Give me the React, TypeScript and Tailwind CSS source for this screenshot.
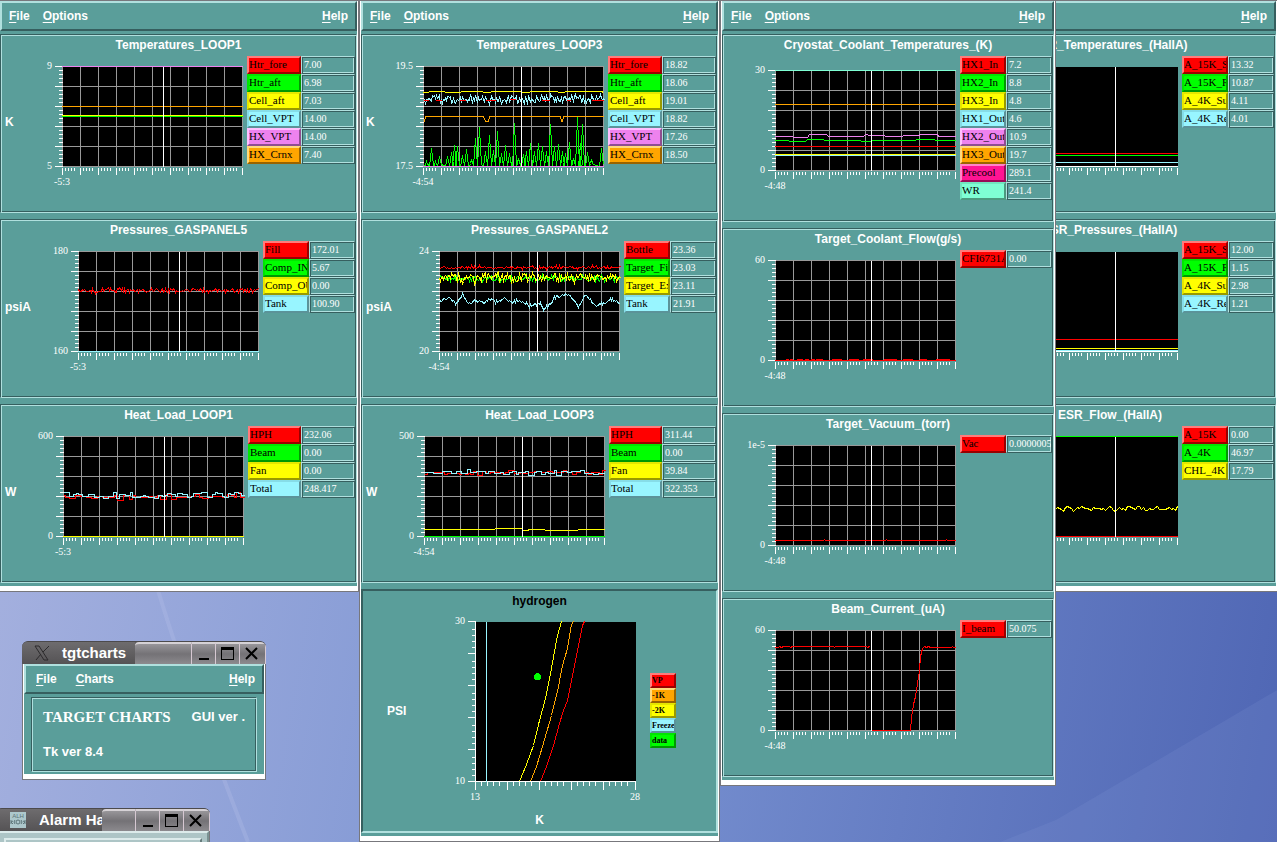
import { Fragment, type ReactNode } from 'react';
import clsx from 'clsx';

type Tone = 'red' | 'green' | 'yellow' | 'cyan' | 'violet' | 'orange' | 'pink' | 'aqua';

type Series = { tone: Tone; points: string };

type ChartData = {
  title: string;
  unit?: string;
  max: string;
  min: string;
  start: string;
  cursor: number;
  grid?: boolean;
  nameWidth: string;
  valueWidth: string;
  legend: [Tone, string, string][];
  series: Series[];
};

const strokes: Record<Tone, string> = {
  red: '#ff0000',
  green: '#00ff00',
  yellow: '#ffff00',
  cyan: '#98f5ff',
  violet: '#ee82ee',
  orange: '#ffa500',
  pink: '#ff1493',
  aqua: '#7fffd4',
};

const toneClasses: Record<Tone, string> = {
  red: 'bg-[#ff0000] border-t-[#ff7b7b] border-l-[#ff7b7b] border-b-[#990000] border-r-[#990000]',
  green: 'bg-[#00ff00] border-t-[#00e600] border-l-[#00e600] border-b-[#009900] border-r-[#009900]',
  yellow: 'bg-[#ffff00] border-t-[#e6e600] border-l-[#e6e600] border-b-[#999900] border-r-[#999900]',
  cyan: 'bg-[#98f5ff] border-t-[#86dde8] border-l-[#86dde8] border-b-[#5b9399] border-r-[#5b9399]',
  violet: 'bg-[#ee82ee] border-t-[#ffc0ff] border-l-[#ffc0ff] border-b-[#8f4e8f] border-r-[#8f4e8f]',
  orange: 'bg-[#ffa500] border-t-[#ffd97b] border-l-[#ffd97b] border-b-[#996300] border-r-[#996300]',
  pink: 'bg-[#ff1493] border-t-[#ff85c8] border-l-[#ff85c8] border-b-[#990c58] border-r-[#990c58]',
  aqua: 'bg-[#7fffd4] border-t-[#72e6bf] border-l-[#72e6bf] border-b-[#4c997f] border-r-[#4c997f]',
};

const groove =
  'border border-t-[#365f5f] border-l-[#365f5f] border-b-[#b0e0de] border-r-[#b0e0de] p-px shadow-[inset_1px_1px_0_#b0e0de,inset_-1px_-1px_0_#365f5f]';
const ridge =
  'border border-t-[#b0e0de] border-l-[#b0e0de] border-b-[#365f5f] border-r-[#365f5f] shadow-[inset_1px_1px_0_#365f5f,inset_-1px_-1px_0_#b0e0de]';
const raised =
  'border-2 border-t-[#b0e0de] border-l-[#b0e0de] border-b-[#365f5f] border-r-[#365f5f]';
const serif = "font-['Liberation_Serif',serif]";

function random(seed: number) {
  let s = seed * 7919 + 17;
  return () => {
    s = (s * 1103515245 + 12345) % 2147483648;
    return s / 2147483648;
  };
}

function flat(y: number, from = -1, to = 180) {
  return `${from},${y} ${to},${y}`;
}

// Signal that wobbles around a base value
function noise(seed: number, base: number, amp: number, step = 1) {
  const next = random(seed);
  const out: string[] = [];
  for (let x = 0; x <= 181; x += step) {
    const swing = (next() + next() - 1) * amp;
    out.push(`${x},${Math.round(base + swing)}`);
  }
  return out.join(' ');
}

// Same, but the value holds for a few samples before it moves
function steps(seed: number, base: number, amp: number) {
  const next = random(seed);
  const out: string[] = [];
  let x = 0;
  while (x < 180) {
    const y = Math.round(base + (next() + next() - 1) * amp);
    const end = Math.min(181, x + 2 + Math.floor(next() * 5));
    out.push(`${x},${y} ${end},${y}`);
    x = end;
  }
  return out.join(' ');
}

function wander(seed: number, knots: [number, number][], amp: number) {
  const next = random(seed);
  const out: string[] = [];
  for (let i = 0; i < knots.length - 1; i++) {
    const [x0, y0] = knots[i];
    const [x1, y1] = knots[i + 1];
    for (let x = x0; x < x1; x++) {
      const y = y0 + ((y1 - y0) * (x - x0)) / (x1 - x0);
      out.push(`${x},${Math.round(y + (next() - 0.5) * amp)}`);
    }
  }
  return out.join(' ');
}

function spikes(peaks: [number, number][]) {
  return peaks
    .map(([x, y]) => `${x - 2},100 ${x - 1},${Math.round(y + (100 - y) * 0.5)} ${x},${y} ${x + 1},${Math.round(y + (100 - y) * 0.5)} ${x + 2},98`)
    .join(' ');
}

const htrAft = spikes([
  [3, 95], [8, 82], [12, 95], [16, 90], [24, 90], [28, 86], [31, 79], [34, 80], [39, 89],
  [43, 83], [48, 93], [52, 72], [56, 61], [62, 85], [66, 69], [70, 84], [74, 65], [78, 87],
  [82, 79], [86, 87], [91, 57], [95, 92], [100, 88], [103, 85], [107, 77], [111, 85],
  [115, 77], [119, 80], [123, 85], [127, 58], [131, 80], [135, 78], [139, 85], [142, 87],
  [146, 76], [150, 92], [154, 51], [157, 77], [159, 58], [164, 86], [168, 93], [178, 82],
]);

const loop1: ChartData[] = [
  {
    title: 'Temperatures_LOOP1',
    unit: 'K',
    max: '9',
    min: '5',
    start: '-5:3',
    cursor: 101,
    nameWidth: 'w-[54px]',
    valueWidth: 'w-[54px]',
    legend: [
      ['red', 'Htr_fore', '7.00'],
      ['green', 'Htr_aft', '6.98'],
      ['yellow', 'Cell_aft', '7.03'],
      ['cyan', 'Cell_VPT', '14.00'],
      ['violet', 'HX_VPT', '14.00'],
      ['orange', 'HX_Crnx', '7.40'],
    ],
    series: [
      { tone: 'violet', points: flat(0) },
      { tone: 'orange', points: flat(40) },
      { tone: 'yellow', points: flat(49) },
      { tone: 'green', points: flat(50) },
    ],
  },
  {
    title: 'Pressures_GASPANEL5',
    unit: 'psiA',
    max: '180',
    min: '160',
    start: '-5:3',
    cursor: 101,
    nameWidth: 'w-[46px]',
    valueWidth: 'w-[46px]',
    legend: [
      ['red', 'Fill', '172.01'],
      ['green', 'Comp_IN', '5.67'],
      ['yellow', 'Comp_OUT', '0.00'],
      ['cyan', 'Tank', '100.90'],
    ],
    series: [
      { tone: 'red', points: noise(3, 39, 3) },
      { tone: 'cyan', points: flat(100) },
    ],
  },
  {
    title: 'Heat_Load_LOOP1',
    unit: 'W',
    max: '600',
    min: '0',
    start: '-5:3',
    cursor: 101,
    nameWidth: 'w-[53px]',
    valueWidth: 'w-[54px]',
    legend: [
      ['red', 'HPH', '232.06'],
      ['green', 'Beam', '0.00'],
      ['yellow', 'Fan', '0.00'],
      ['cyan', 'Total', '248.417'],
    ],
    series: [
      { tone: 'red', points: steps(8, 60, 4) },
      { tone: 'cyan', points: steps(5, 59, 4) },
      { tone: 'yellow', points: flat(100) },
    ],
  },
];

const loop3: ChartData[] = [
  {
    title: 'Temperatures_LOOP3',
    unit: 'K',
    max: '19.5',
    min: '17.5',
    start: '-4:54',
    cursor: 98,
    nameWidth: 'w-[54px]',
    valueWidth: 'w-[54px]',
    legend: [
      ['red', 'Htr_fore', '18.82'],
      ['green', 'Htr_aft', '18.06'],
      ['yellow', 'Cell_aft', '19.01'],
      ['cyan', 'Cell_VPT', '18.82'],
      ['violet', 'HX_VPT', '17.26'],
      ['orange', 'HX_Crnx', '18.50'],
    ],
    series: [
      { tone: 'green', points: htrAft },
      { tone: 'cyan', points: noise(12, 33, 6) },
      { tone: 'red', points: '0,34 5,34' },
      { tone: 'red', points: '12,34 18,34' },
      { tone: 'red', points: '36,34 42,34' },
      { tone: 'red', points: '62,34 72,34' },
      { tone: 'red', points: '86,33 92,33' },
      { tone: 'red', points: '118,34 126,34' },
      { tone: 'red', points: '143,34 147,34' },
      { tone: 'red', points: '168,34 180,34' },
      {
        tone: 'yellow',
        points: '-1,26 5,26 6,25 21,25 22,26 37,26 38,25 59,25 60,26 67,26 68,25 98,25 99,26 106,26 107,25 134,25 135,26 141,26 142,25 178,25 180,26',
      },
      {
        tone: 'orange',
        points: '0,55 1,55 2,50 60,50 62,55 65,55 66,50 137,50 138,55 139,55 140,50 180,50',
      },
      { tone: 'violet', points: flat(100) },
    ],
  },
  {
    title: 'Pressures_GASPANEL2',
    unit: 'psiA',
    max: '24',
    min: '20',
    start: '-4:54',
    cursor: 98,
    nameWidth: 'w-[46px]',
    valueWidth: 'w-[46px]',
    legend: [
      ['red', 'Bottle', '23.36'],
      ['green', 'Target_Fill', '23.03'],
      ['yellow', 'Target_Exh', '23.11'],
      ['cyan', 'Tank', '21.91'],
    ],
    series: [
      { tone: 'red', points: noise(21, 16, 2) },
      { tone: 'green', points: noise(22, 27, 4) },
      { tone: 'yellow', points: noise(23, 26, 7) },
      {
        tone: 'cyan',
        points: wander(
          24,
          [
            [0, 50], [8, 46], [17, 52], [23, 43], [29, 52], [36, 49], [44, 51], [51, 48], [58, 51],
            [66, 46], [72, 51], [79, 49], [86, 52], [90, 55], [101, 51], [104, 58], [112, 52],
            [114, 47], [127, 42], [134, 48], [139, 55], [146, 43], [156, 54], [166, 51],
            [171, 47], [181, 52],
          ],
          3,
        ),
      },
    ],
  },
  {
    title: 'Heat_Load_LOOP3',
    unit: 'W',
    max: '500',
    min: '0',
    start: '-4:54',
    cursor: 98,
    nameWidth: 'w-[53px]',
    valueWidth: 'w-[54px]',
    legend: [
      ['red', 'HPH', '311.44'],
      ['green', 'Beam', '0.00'],
      ['yellow', 'Fan', '39.84'],
      ['cyan', 'Total', '322.353'],
    ],
    series: [
      { tone: 'red', points: steps(31, 36, 3) },
      { tone: 'cyan', points: steps(36, 36, 3) },
      {
        tone: 'yellow',
        points: '-1,93 70,93 71,92 98,92 98,94 104,94 104,93 120,93 121,94 153,94 154,93 180,93',
      },
      { tone: 'green', points: flat(100) },
    ],
  },
];

const cryostat: ChartData[] = [
  {
    title: 'Cryostat_Coolant_Temperatures_(K)',
    max: '30',
    min: '0',
    start: '-4:48',
    cursor: 96,
    nameWidth: 'w-[46px]',
    valueWidth: 'w-[46px]',
    legend: [
      ['red', 'HX1_In', '7.2'],
      ['green', 'HX2_In', '8.8'],
      ['yellow', 'HX3_In', '4.8'],
      ['cyan', 'HX1_Out', '4.6'],
      ['violet', 'HX2_Out', '10.9'],
      ['orange', 'HX3_Out', '19.7'],
      ['pink', 'Precool', '289.1'],
      ['aqua', 'WR', '241.4'],
    ],
    series: [
      { tone: 'aqua', points: flat(0) },
      { tone: 'orange', points: flat(34) },
      {
        tone: 'violet',
        points: '-1,66 17,66 18,67 32,67 34,64 51,64 53,66 88,66 90,64 95,65 109,65 110,66 127,66 128,65 143,65 145,64 162,64 163,66 180,66',
      },
      {
        tone: 'green',
        points: '-1,70 13,70 14,71 30,71 32,69 48,69 49,70 85,70 86,71 96,71 97,70 140,70 141,69 159,69 160,70 180,70',
      },
      { tone: 'red', points: flat(76) },
      { tone: 'cyan', points: flat(85) },
      { tone: 'yellow', points: flat(84) },
    ],
  },
  {
    title: 'Target_Coolant_Flow(g/s)',
    max: '60',
    min: '0',
    start: '-4:48',
    cursor: 96,
    nameWidth: 'w-[46px]',
    valueWidth: 'w-[46px]',
    legend: [['red', 'CFI6731A', '0.00']],
    series: [
      {
        tone: 'red',
        points: '10,99 12,99 14,100 16,99 18,100 26,99 28,100 32,99 34,100 38,99 40,100 42,99 47,99 48,100 66,99 67,100 81,99 85,100 91,99 96,99 98,100 120,99 122,100 134,99 140,100 150,99 153,100 169,99 173,99 176,100',
      },
      { tone: 'red', points: flat(100) },
    ],
  },
  {
    title: 'Target_Vacuum_(torr)',
    max: '1e-5',
    min: '0',
    start: '-4:48',
    cursor: 96,
    nameWidth: 'w-[46px]',
    valueWidth: 'w-[46px]',
    legend: [['red', 'Vac', '0.0000005']],
    series: [{ tone: 'red', points: '-1,95 48,95 49,94 50,95 110,95 111,94 112,95 170,95 171,94 172,95 180,95' }],
  },
  {
    title: 'Beam_Current_(uA)',
    max: '60',
    min: '0',
    start: '-4:48',
    cursor: 96,
    nameWidth: 'w-[46px]',
    valueWidth: 'w-[46px]',
    legend: [['red', 'I_beam', '50.075']],
    series: [
      {
        tone: 'red',
        points: '-1,17 3,17 4,16 6,17 8,16 14,16 15,17 17,16 58,16 59,17 60,16 91,16 92,17 94,16 95,17',
      },
      {
        tone: 'red',
        points: '96,100 135,100 136,87 138,74 140,66 142,53 144,40 145,26 147,18 149,16 151,17 153,16 155,17 176,17 177,16 178,17 180,17',
      },
    ],
  },
];

const esr: ChartData[] = [
  {
    title: 'ESR_Temperatures_(HallA)',
    max: '100',
    min: '0',
    start: '-4:48',
    cursor: 118,
    grid: false,
    nameWidth: 'w-[46px]',
    valueWidth: 'w-[46px]',
    legend: [
      ['red', 'A_15K_Sup', '13.32'],
      ['green', 'A_15K_Ret', '10.87'],
      ['yellow', 'A_4K_Sup', '4.11'],
      ['cyan', 'A_4K_Ret', '4.01'],
    ],
    series: [
      { tone: 'red', points: flat(87) },
      { tone: 'green', points: flat(89) },
      { tone: 'cyan', points: flat(96) },
    ],
  },
  {
    title: 'ESR_Pressures_(HallA)',
    max: '100',
    min: '0',
    start: '-4:48',
    cursor: 118,
    grid: false,
    nameWidth: 'w-[46px]',
    valueWidth: 'w-[46px]',
    legend: [
      ['red', 'A_15K_Sup', '12.00'],
      ['green', 'A_15K_Ret', '1.15'],
      ['yellow', 'A_4K_Sup', '2.98'],
      ['cyan', 'A_4K_Ret', '1.21'],
    ],
    series: [
      { tone: 'red', points: flat(88) },
      { tone: 'yellow', points: flat(97) },
      { tone: 'cyan', points: flat(99) },
    ],
  },
  {
    title: 'ESR_Flow_(HallA)',
    max: '100',
    min: '0',
    start: '-4:48',
    cursor: 118,
    grid: false,
    nameWidth: 'w-[46px]',
    valueWidth: 'w-[46px]',
    legend: [
      ['red', 'A_15K', '0.00'],
      ['green', 'A_4K', '46.97'],
      ['yellow', 'CHL_4K', '17.79'],
    ],
    series: [
      { tone: 'green', points: flat(0) },
      { tone: 'yellow', points: noise(52, 72, 3, 2) },
      { tone: 'red', points: flat(100) },
    ],
  },
];

function range(count: number) {
  return Array.from({ length: count }, (_, i) => i);
}

function MenuBar({ items, className }: { items: string[]; className?: string }) {
  return (
    <nav className={clsx('flex h-[30px] items-center pr-[7px] text-[12px] font-bold', raised, className)}>
      {items.map((item, i) => (
        <button
          key={item}
          type="button"
          className={clsx('leading-4', i === items.length - 1 && 'ml-auto')}
        >
          <u className="underline-offset-2">{item[0]}</u>
          {item.slice(1)}
        </button>
      ))}
    </nav>
  );
}

function StripChart({ chart }: { chart: ChartData }) {
  const grid = chart.grid !== false;
  return (
    <svg
      width="229"
      height="136"
      className={clsx('shrink-0', chart.legend.length > 6 && 'mt-1')}
      role="img"
      aria-label={chart.title}
    >
      <g transform="translate(44.5 10.5)" fill="none" strokeWidth="1" shapeRendering="crispEdges">
        <rect x="0" y="0" width="180" height="100" fill="#000" />
        {grid && (
          <g stroke="#999999">
            {range(11).map((i) => (
              <line key={i} x1={i * 18} y1="0" x2={i * 18} y2="100" />
            ))}
            {range(6).map((i) => (
              <line key={i} x1="0" y1={i * 20} x2="180" y2={i * 20} />
            ))}
          </g>
        )}
        <g stroke="#fff">
          {range(26).map((i) => (
            <line key={i} x1={i % 5 === 0 ? -8 : -4} y1={i * 4} x2="0" y2={i * 4} />
          ))}
          {range(11).map((i) => (
            <Fragment key={i}>
              <line x1={i * 18} y1="101" x2={i * 18} y2="108" />
              {i < 10 &&
                [3, 6, 9, 12].map((dx) => (
                  <line key={dx} x1={i * 18 + dx} y1="101" x2={i * 18 + dx} y2="104" />
                ))}
            </Fragment>
          ))}
          {!grid && <line x1="0" y1="100" x2="180" y2="100" />}
        </g>
        {chart.series.map((s, i) => (
          <polyline key={i} points={s.points} stroke={strokes[s.tone]} />
        ))}
        <line x1={chart.cursor} y1="0" x2={chart.cursor} y2="100" stroke="#fff" />
      </g>
      <g className={clsx('fill-white text-[10px]', serif)}>
        <text x="34" y="13" textAnchor="end">{chart.max}</text>
        <text x="34" y="113" textAnchor="end">{chart.min}</text>
        <text x="44" y="129" textAnchor="middle">{chart.start}</text>
      </g>
    </svg>
  );
}

function ChartPanel({ chart }: { chart: ChartData }) {
  return (
    <section className={clsx('pb-[20px]', groove)}>
      <h2 className="h-[20px] text-center text-[12px] leading-[18px] font-bold">{chart.title}</h2>
      <div className="flex items-start">
        <span className="flex-1 self-center pb-1 pl-[3px] text-[12px] font-bold">{chart.unit}</span>
        <StripChart chart={chart} />
        <ul className={clsx('shrink-0 pb-px', serif)}>
          {chart.legend.map(([tone, name, value]) => (
            <li key={name} className="flex h-[18px]">
              <button
                type="button"
                className={clsx(
                  'overflow-hidden border-2 pb-0.5 text-left text-[11px] leading-3 whitespace-nowrap text-black',
                  toneClasses[tone],
                  chart.nameWidth,
                )}
              >
                {name}
              </button>
              <input
                readOnly
                aria-label={name}
                value={value}
                className={clsx('pb-0.5 pl-0.5 text-[10px] text-white outline-none', ridge, chart.valueWidth)}
              />
            </li>
          ))}
        </ul>
      </div>
    </section>
  );
}

const vapour: Series[] = [
  { tone: 'cyan', points: '11,0 11,160' },
  { tone: 'yellow', points: '44,160 51,143 58,124 64,99 70,77 75,52 79,30 82,14 86,0' },
  { tone: 'orange', points: '55,160 61,145 67,125 76,94 82,70 87,44 92,27 96,3 98,0' },
  { tone: 'red', points: '65,160 71,145 78,124 84,102 88,89 92,79 98,49 103,24 107,4 109,0' },
];

const vapourLegend: [Tone, string][] = [
  ['red', 'VP'],
  ['orange', '-1K'],
  ['yellow', '-2K'],
  ['cyan', 'Freeze'],
  ['green', 'data'],
];

function HydrogenPanel() {
  return (
    <section className="border-2 border-t-[#365f5f] border-r-[#b0e0de] border-b-[#b0e0de] border-l-[#365f5f] pb-px">
      <h2 className="h-[20px] text-center text-[12px] leading-5 font-bold text-black">hydrogen</h2>
      <div className="flex items-center justify-center pr-4">
        <span className="w-[44px] text-[12px] font-bold">PSI</span>
        <svg width="219" height="199" role="img" aria-label="hydrogen">
          <g transform="translate(44.5 10.5)" fill="none" shapeRendering="crispEdges">
            <rect x="0" y="0" width="160" height="160" fill="#000" />
            <g stroke="#fff">
              <polyline points="0,0 0,160 160,160" />
              {range(6).map((i) => (
                <Fragment key={i}>
                  <line x1="-8" y1={i * 32} x2="0" y2={i * 32} />
                  <line x1={i * 32} y1="160" x2={i * 32} y2="168" />
                  {i < 5 &&
                    [6, 12, 18, 24].map((d) => (
                      <Fragment key={d}>
                        <line x1="-4" y1={i * 32 + d + 2} x2="0" y2={i * 32 + d + 2} />
                        <line x1={i * 32 + d} y1="160" x2={i * 32 + d} y2="164" />
                      </Fragment>
                    ))}
                </Fragment>
              ))}
            </g>
            {vapour.map((s) => (
              <polyline key={s.tone} points={s.points} stroke={strokes[s.tone]} />
            ))}
            <circle cx="62" cy="55" r="3.5" fill="#00ff00" />
          </g>
          <g className={clsx('fill-white text-[10px]', serif)}>
            <text x="34" y="13" textAnchor="end">30</text>
            <text x="34" y="173" textAnchor="end">10</text>
            <text x="44" y="189" textAnchor="middle">13</text>
            <text x="204" y="189" textAnchor="middle">28</text>
          </g>
        </svg>
        <ul className={clsx('w-[26px]', serif)}>
          {vapourLegend.map(([tone, name]) => (
            <li key={name} className="flex h-[15px]">
              <button
                type="button"
                className={clsx(
                  'w-full overflow-hidden border-2 text-left text-[8px] leading-[10px] font-bold whitespace-nowrap text-black',
                  toneClasses[tone],
                )}
              >
                {name}
              </button>
            </li>
          ))}
        </ul>
      </div>
      <p className="h-[20px] text-center text-[12px] leading-5 font-bold">K</p>
    </section>
  );
}

function ChartWindow({ charts, className, children }: { charts: ChartData[]; className: string; children?: ReactNode }) {
  return (
    <div className={clsx('absolute top-px border-x border-b border-[#77777c] bg-white px-px pb-[5px]', className)}>
      <div className="bg-[#5a9e9a] pb-[3px] text-white">
        <MenuBar items={['File', 'Options', 'Help']} className="gap-[13px] pl-[7px]" />
        <div className="flex flex-col gap-[6px] pt-[3px]">
          {charts.map((chart) => (
            <ChartPanel key={chart.title} chart={chart} />
          ))}
          {children}
        </div>
      </div>
    </div>
  );
}

function TitleBar({ icon, title, tabClass }: { icon: ReactNode; title: string; tabClass: string }) {
  const button =
    'h-full border-t-2 border-r border-t-[#d6d2d6] border-r-[#d6c8d2] bg-linear-to-b from-[#98969a] via-[#747276] to-[#8c8a8e]';
  return (
    <header className="flex h-[23px] overflow-hidden rounded-t-md border-t border-[#4c4a4c] bg-[#5d5b5d]">
      <div className={clsx('flex items-center overflow-hidden bg-linear-to-b from-[#6e6c6e] to-[#555355]', tabClass)}>
        {icon}
        <h1 className="text-[15px] leading-5 font-bold whitespace-nowrap text-white">{title}</h1>
      </div>
      <div className="flex-1 rounded-tl border-t-2 border-r border-t-[#d6d2d6] border-r-[#d6c8d2] bg-linear-to-b from-[#98969a] via-[#747276] to-[#8c8a8e]" />
      <button type="button" aria-label="Minimize" className={clsx('w-6', button)}>
        <svg width="23" height="20" shapeRendering="crispEdges">
          <rect x="7" y="14" width="10" height="2" />
        </svg>
      </button>
      <button type="button" aria-label="Maximize" className={clsx('w-6', button)}>
        <svg width="23" height="20" shapeRendering="crispEdges">
          <path d="M5 3h13v13H5zM6 6v9h11V6z" fillRule="evenodd" />
        </svg>
      </button>
      <button type="button" aria-label="Close" className={clsx('w-[26px]', button)}>
        <svg width="23" height="20" stroke="#000" strokeWidth="2">
          <path d="M6 4l11 11M17 4L6 15" />
        </svg>
      </button>
    </header>
  );
}

function TargetCharts() {
  return (
    <div className="absolute top-[641px] left-[22px] w-[244px]">
      <TitleBar
        title="tgtcharts"
        tabClass="w-[113px] gap-[10px] pl-3"
        icon={
          <svg width="18" height="16" fill="none" stroke="#2c2a2c">
            <path d="M1 1h4l9 14h-4zM15 1L9 7M7 9l-5 6" />
          </svg>
        }
      />
      <div className="border border-t-0 border-[#77777c] bg-white px-px pb-[5px]">
        <div className="bg-[#5a9e9a] pb-[2px] text-white">
          <MenuBar items={['File', 'Charts', 'Help']} className="gap-[19px] pl-[10px]" />
          <div className={clsx('mx-[7px] mt-[3px] text-[13px] font-bold', groove)}>
            <div className="flex items-center justify-between px-[10px] pt-[10px]">
              <p className={clsx('text-[15px] leading-4', serif)}>TARGET CHARTS</p>
              <p className="leading-4">GUI ver .</p>
            </div>
            <p className="px-[10px] pt-[19px] pb-[10px] leading-4">Tk ver 8.4</p>
          </div>
        </div>
      </div>
    </div>
  );
}

function AlarmHandler() {
  return (
    <div className="absolute top-[808px] -left-1 w-[214px]">
      <TitleBar
        title="Alarm Handler"
        tabClass="w-[106px] gap-[13px] pl-[14px]"
        icon={
          <svg width="16" height="16" className="shrink-0">
            <rect width="16" height="16" fill="#adc8cc" />
            <text x="8" y="6" textAnchor="middle" fontSize="6" fill="#5c7478">ALH</text>
            <path d="M1 8v4M3 9l-2 1 2 2M15 8v4M13 9l2 1-2 2M5 8l-1 2 1 2M11 8l1 2-1 2" stroke="#5c7478" fill="none" />
            <circle cx="8" cy="10" r="2" stroke="#5c7478" fill="none" />
          </svg>
        }
      />
      <div className="border-x border-[#77777c] bg-[#adc5c6]">
        <div className="h-10 border-2 border-t-[#dcebeb] border-r-[#7b9393] border-b-[#7b9393] border-l-[#dcebeb] p-[5px]">
          <div className="h-full border-2 border-t-[#dcebeb] border-r-[#667c7c] border-b-[#667c7c] border-l-[#dcebeb]" />
        </div>
      </div>
    </div>
  );
}

export default function App() {
  return (
    <main className="relative h-screen overflow-hidden bg-[#77777c] font-['Liberation_Sans',Arial,sans-serif]">
      <div className="absolute inset-x-0 top-px bottom-0 bg-linear-[100deg] from-[#aab4e0] via-[#7a93d2] to-[#4f66b4]">
        <svg className="size-full" viewBox="0 0 1277 842" preserveAspectRatio="none" fill="none">
          <path d="M158 590Q185 680 248 842" stroke="#b5c0e8" strokeOpacity=".3" strokeWidth="4" />
          <path d="M1056 820L1277 690V842H1000z" fill="#8ba0dc" fillOpacity=".15" />
        </svg>
      </div>
      <ChartWindow charts={esr} className="left-[942px] w-[336px]" />
      <ChartWindow charts={loop1} className="-left-0.5 w-[361px]" />
      <ChartWindow charts={loop3} className="left-[359px] w-[361px]">
        <HydrogenPanel />
      </ChartWindow>
      <ChartWindow charts={cryostat} className="left-[720px] w-[336px]" />
      <TargetCharts />
      <AlarmHandler />
    </main>
  );
}
